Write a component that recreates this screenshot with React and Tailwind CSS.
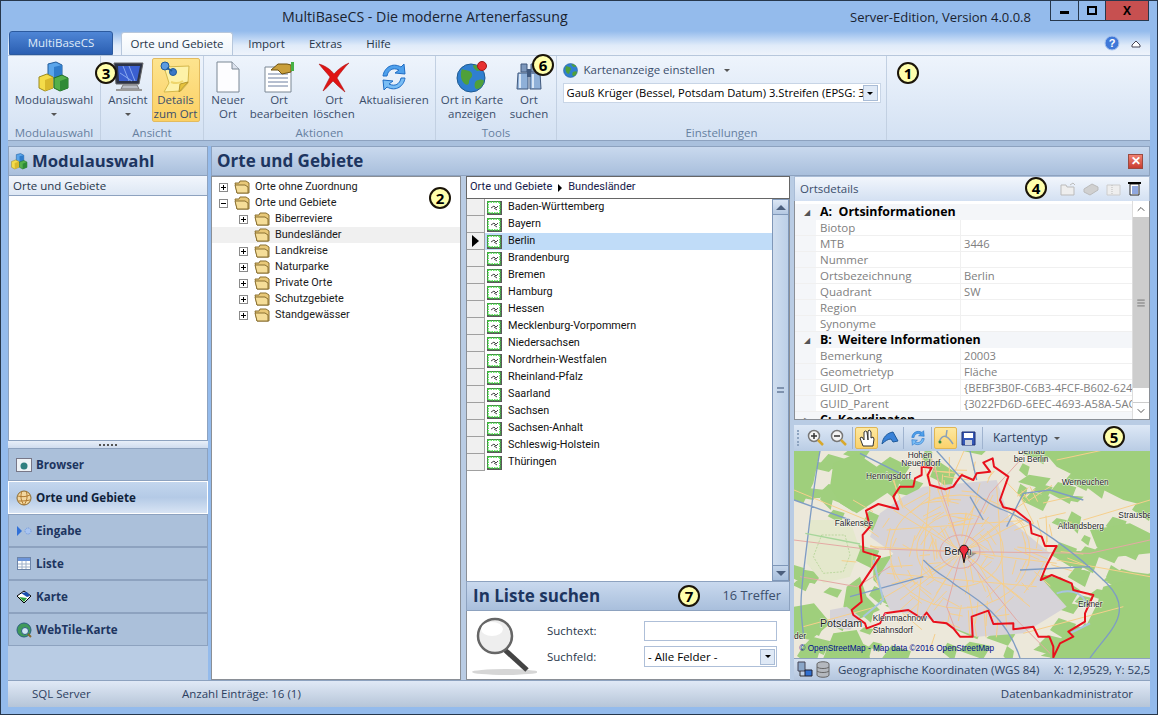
import React from 'react';
import { ChevronUp, ChevronDown, Menu } from 'lucide-react';

// Sprechblasen mit Nummer
const Badge = ({ n, className }) => (
    <div className={`absolute z-10 w-[22px] h-[22px] rounded-full bg-[#ffffac] border-2 border-[#1a1408] flex items-center justify-center text-[15px] leading-none font-bold text-black ${className}`}>{n}</div>
);

const Cubes = ({ s = 32 }) => (
    <svg width={s} height={s} viewBox="0 0 32 32">
        <path d="M10 3l8-2 6 3v11l-8 2-6-3z" fill="#5aa5ea" stroke="#1f5a9a" />
        <path d="M16 6l8-2v11l-8 2z" fill="#2f7ccb" />
        <path d="M1 16l8-3 6 3v11l-8 3-6-3z" fill="#f4dc4a" stroke="#9a8a20" />
        <path d="M7 19l8-3v11l-8 3z" fill="#d9b92c" />
        <path d="M16 17l8-3 6 3v10l-8 3-6-3z" fill="#55b04a" stroke="#1f6f24" />
        <path d="M22 20l8-3v10l-8 3z" fill="#2f8a36" />
    </svg>
);

const Monitor = () => (
    <svg width="34" height="32" viewBox="0 0 34 32">
        <path d="M3 2h29l-4 21H5z" fill="#2c3346" stroke="#666" />
        <path d="M7 5h22l-3 15H8z" fill="#3a5fd0" />
        <path d="M12 5l6 15M18 5l6 15M9 12l12 8" stroke="#88a8f0" fill="none" />
        <path d="M12 24h14l2 4H10z" fill="#b8bcc4" stroke="#777" />
        <path d="M5 29h26" stroke="#999" strokeWidth="2" />
    </svg>
);

const Note = () => (
    <svg width="32" height="32" viewBox="0 0 32 32">
        <path d="M4 6l25-1-1 17-7 8-17 1 5-9z" fill="#fdf2a8" stroke="#d4b84c" />
        <path d="M28 21l-8 2-1 8z" fill="#e6c23c" stroke="#b8982c" />
        <path d="M11 21c5 2 9 1 12-1" stroke="#eed66c" fill="none" strokeWidth="2" />
        <circle cx="5" cy="5" r="4" fill="#5c9ae0" stroke="#1f5a9a" />
        <circle cx="13" cy="11" r="3.5" fill="#3a78c8" stroke="#1f5a9a" />
        <path d="M7 7l5 3" stroke="#1f5a9a" strokeWidth="2" />
    </svg>
);

const Doc = () => (
    <svg width="26" height="32" viewBox="0 0 26 32">
        <path d="M2 1h15l7 7v23H2z" fill="#fdfdff" stroke="#7b8794" />
        <path d="M17 1v7h7" fill="#dde3ee" stroke="#7b8794" />
    </svg>
);

const EditDoc = () => (
    <svg width="32" height="32" viewBox="0 0 32 32">
        <path d="M2 6h26v25H2z" fill="#fff" stroke="#7b8794" />
        <path d="M5 13h20M5 17h20M5 21h20M5 25h20" stroke="#6d7fa0" />
        <path d="M8 9l7-6h9l4 1v7l-9 2-4-4z" fill="#c99f3c" stroke="#6e5210" />
        <rect x="28" y="1" width="3" height="9" fill="#45b045" />
    </svg>
);

const RedX = () => (
    <svg width="32" height="32" viewBox="0 0 32 32">
        <path d="M1 3C8 5 13 9 16 13 20 8 26 4 31 2 27 6 22 12 19 17 22 22 25 27 27 31 22 27 18 23 15 20 11 24 8 28 5 30 7 25 10 20 12 16 8 11 4 7 1 3Z" fill="#e01414" stroke="#a00c0c" strokeWidth="0.5" />
    </svg>
);

const Refresh = ({ s = 32 }) => (
    <svg width={s} height={s} viewBox="0 0 32 32" fill="none">
        <path d="M5 15C6 7 14 1 23 6l3-3 1 10-10-1 4-3C15 6 10 9 9 15z" fill="#4ea0ec" stroke="#1e6cc4" />
        <path d="M27 17c-1 8-9 14-18 9l-3 3-1-10 10 1-4 3c6 3 11 0 12-6z" fill="#79bdf5" stroke="#1e6cc4" />
    </svg>
);

const Globe = ({ s = 32, pin }) => (
    <svg width={s} height={s} viewBox="0 0 32 32">
        <circle cx="15" cy="17" r="14" fill="#2f7fd0" stroke="#1f5a90" />
        <path d="M6 8c5 2 9 1 10 5s-3 4-3 8-4 3-6 0-3-8-1-13zM20 20c4-2 7-2 8 0-1 5-4 8-7 8s-3-6-1-8zM17 4c4 0 8 2 10 5l-6 1c-2-2-4-3-4-6z" fill="#4fa03a" />
        {pin && <circle cx="26" cy="5" r="4.5" fill="#e83030" stroke="#a01818" />}
    </svg>
);

const Binoculars = () => (
    <svg width="28" height="32" viewBox="0 0 28 32">
        <path d="M6 3h6v8H6zM16 3h6v8h-6z" fill="#7e98bc" stroke="#41597d" />
        <path d="M3 12h10v16H2zM15 12h10l1 16H15z" fill="#8fb0d8" stroke="#41597d" />
        <path d="M5 13v14M18 13v14" stroke="#d8e6f6" strokeWidth="2" />
        <path d="M12 8h4v8h-4z" fill="#41597d" />
    </svg>
);

const Folder = () => (
    <svg width="16" height="14" viewBox="0 0 16 14">
        <path d="M1 3h4l1-2h6l3 2v10H3z" fill="#e8c878" stroke="#8a7030" />
        <path d="M1 5h10l3 2 0 6H3z" fill="#f5dd98" stroke="#8a7030" />
    </svg>
);

const Toggle = ({ open }) => (
    <span className="w-[9px] h-[9px] border border-[#8a8a8a] bg-white relative block">
        <span className="absolute left-[1px] top-[3px] w-[5px] h-[1px] bg-black" />
        {!open && <span className="absolute left-[3px] top-[1px] w-[1px] h-[5px] bg-black" />}
    </span>
);

const GeoIcon = () => (
    <svg width="15" height="14" viewBox="0 0 15 14">
        <rect x="0" y="0" width="15" height="14" fill="#5a5a5a" />
        <rect x="1" y="1" width="12" height="11" fill="#fff" stroke="#36e036" strokeWidth="1.5" strokeDasharray="1.5 1" />
        <path d="M4 7l3-2 2 2 2-2M7 7l3 2" stroke="#333" fill="none" strokeWidth="0.9" />
    </svg>
);

const Arrow = () => <span className="w-0 h-0 border-x-[3px] border-x-transparent border-t-[3px] border-t-[#555] block" />;

const ComboBtn = () => (
    <span className="w-[15px] h-[16px] bg-[#dfe9f6] border border-[#a9bcd6] flex items-center justify-center shrink-0">
        <span className="w-0 h-0 border-x-[3px] border-x-transparent border-t-[3px] border-t-black block" />
    </span>
);

const RibbonBtn = ({ icon, lines, arrow, active, width }) => (
    <div className={`flex flex-col items-center ${width} h-[64px] pt-[2px] border rounded-[2px] ${active ? 'bg-gradient-to-b from-[#fde48e] to-[#fbd063] border-[#e3bb5e]' : 'border-transparent'}`}>
        <div className="h-[32px] flex items-center justify-center">{icon}</div>
        <div className="text-center leading-[14px] text-[#3b4e6b] whitespace-nowrap">
            {lines.map((l) => <div key={l}>{l}</div>)}
            {arrow && <div className="h-[14px] flex items-center justify-center"><Arrow /></div>}
        </div>
    </div>
);

const RibbonGroup = ({ label, width, children }) => (
    <div className={`${width} h-full flex flex-col border-r border-[#c2d0e2] shrink-0`}>
        <div className="flex-1 flex justify-center pt-[2px]">{children}</div>
        <div className="h-[14px] text-center leading-[14px] text-[#66809f]">{label}</div>
    </div>
);

const tabs = [['Import', 'w-[67px]'], ['Extras', 'w-[51px]'], ['Hilfe', 'w-[55px]']];

const sideItems = [
    ['Browser', <svg key="b" width="16" height="14" viewBox="0 0 16 14"><rect x="0.5" y="0.5" width="15" height="13" fill="#eef2f6" stroke="#778" /><circle cx="8" cy="8" r="3.5" fill="#2f7f80" /></svg>],
    ['Orte und Gebiete', <svg key="o" width="16" height="16" viewBox="0 0 16 16"><circle cx="8" cy="8" r="7" fill="#f3d7a0" stroke="#8a6a30" /><path d="M2 6c4 1 8 1 12-1M2 11c4 0 8 0 12-1M6 1C4 6 5 11 8 15M10 1c2 5 1 10-2 14" stroke="#b07a30" fill="none" /></svg>],
    ['Eingabe', <svg key="e" width="16" height="12" viewBox="0 0 16 12"><path d="M1 1l5 5-5 5z" fill="#3070d8" /><circle cx="12" cy="6" r="3" fill="#a8c4f0" stroke="#6c94dc" strokeDasharray="1 1" /></svg>],
    ['Liste', <svg key="l" width="14" height="13" viewBox="0 0 14 13"><rect x="0.5" y="0.5" width="13" height="12" fill="#fff" stroke="#6c84a8" /><path d="M1 1h12v3H1z" fill="#6c94d8" /><path d="M5 4v8M9 4v8M1 7h12M1 10h12" stroke="#9fb0c8" /></svg>],
    ['Karte', <svg key="k" width="16" height="14" viewBox="0 0 16 14"><path d="M8 1l7 5-7 7-7-7z" fill="#fff" stroke="#000" /><path d="M5 3l6-1 3 4-3 1z" fill="#1a50b0" /><path d="M3 7l5 5 3-4z" fill="#2fa040" /></svg>],
    ['WebTile-Karte', <svg key="w" width="16" height="16" viewBox="0 0 16 16"><circle cx="8" cy="8" r="7" fill="#3f9a5a" stroke="#2c5f80" /><circle cx="9" cy="9" r="3.5" fill="#cfe4f5" stroke="#2c5f80" /><path d="M12 12l3 3" stroke="#8a6a30" strokeWidth="2" /></svg>],
];

const treeRows = [
    ['Orte ohne Zuordnung', 0, 'plus'],
    ['Orte und Gebiete', 0, 'minus'],
    ['Biberreviere', 1, 'plus'],
    ['Bundesländer', 1, null],
    ['Landkreise', 1, 'plus'],
    ['Naturparke', 1, 'plus'],
    ['Private Orte', 1, 'plus'],
    ['Schutzgebiete', 1, 'plus'],
    ['Standgewässer', 1, 'plus'],
];

const laender = ['Baden-Württemberg', 'Bayern', 'Berlin', 'Brandenburg', 'Bremen', 'Hamburg', 'Hessen', 'Mecklenburg-Vorpommern', 'Niedersachsen', 'Nordrhein-Westfalen', 'Rheinland-Pfalz', 'Saarland', 'Sachsen', 'Sachsen-Anhalt', 'Schleswig-Holstein', 'Thüringen'];

const details = [
    ['A:  Ortsinformationen'],
    ['Biotop', ''],
    ['MTB', '3446'],
    ['Nummer', ''],
    ['Ortsbezeichnung', 'Berlin'],
    ['Quadrant', 'SW'],
    ['Region', ''],
    ['Synonyme', ''],
    ['B:  Weitere Informationen'],
    ['Bemerkung', '20003'],
    ['Geometrietyp', 'Fläche'],
    ['GUID_Ort', '{BEBF3B0F-C6B3-4FCF-B602-6242'],
    ['GUID_Parent', '{3022FD6D-6EEC-4693-A58A-5ACD'],
    ['C:  Koordinaten'],
];

const border = 'M395 140L425 143 413 165 420 195 465 208 490 200 500 185 515 165 550 180 560 160 600 155 580 128 608 115 612 140 655 170 630 240 640 262 675 270 720 305 725 340 755 350 765 378 800 378 770 435 752 480 785 465 845 490 850 510 870 515 910 525 885 580 885 605 835 635 850 650 810 670 790 712 790 680 778 650 745 650 730 620 670 628 670 610 610 612 595 572 545 590 548 650 510 650 490 625 470 610 430 605 410 578 395 595 355 570 285 580 270 610 230 625 225 610 190 585 185 570 215 545 210 500 270 410 220 395 218 345 240 320 228 272 265 252 325 268 310 230 330 200 370 200 375 175 395 165Z';

// kleine Zufallsreihe, damit das Straßennetz immer gleich aussieht
let seed = 7;
const rnd = () => {
    seed = (seed * 16807) % 2147483647;
    return seed / 2147483647;
};

const cityRoads = Array.from({ length: 150 }, () => {
    const a = rnd() * Math.PI * 2;
    const r = 30 + rnd() * 290;
    const x = 515 + Math.cos(a) * r;
    const y = 395 + Math.sin(a) * r * 0.8;
    const b = a + (rnd() > 0.5 ? 1.57 : 0) + rnd() * 0.5;
    const l = 25 + rnd() * 60;
    return `M${x.toFixed(0)} ${y.toFixed(0)}L${(x + Math.cos(b) * l).toFixed(0)} ${(y + Math.sin(b) * l).toFixed(0)}`;
}).join('');

const greenBlobs = Array.from({ length: 170 }, () => {
    const a = rnd() * Math.PI * 2;
    const r = 290 + rnd() * 420;
    const x = 515 + Math.cos(a) * r;
    const y = 395 + Math.sin(a) * r * 0.75;
    const w = 14 + rnd() * 36;
    const h = 10 + rnd() * 28;
    return `M${(x - w).toFixed(0)} ${y.toFixed(0)}L${(x - w / 3).toFixed(0)} ${(y - h).toFixed(0)} ${(x + w).toFixed(0)} ${(y - h / 2).toFixed(0)} ${(x + w / 2).toFixed(0)} ${(y + h).toFixed(0)}Z`;
}).join('');

const mapLabels = [
    ['Hohen', 353, 114], ['Neuendorf', 334, 139], ['Hennigsdorf', 228, 176], ['Bernau', 684, 101], ['bei Berlin', 671, 127],
    ['Werneuchen', 815, 196], ['Strausberg', 985, 293], ['Altlandsberg', 803, 328], ['Falkensee', 134, 319], ['Erkner', 864, 562],
    ['Kleinmachnow', 248, 603], ['Stahnsdorf', 248, 640], ['der', 12, 658],
];

const MapView = () => (
    <svg width="356" height="207" viewBox="12 93 1068 621" className="block shrink-0">
        <rect x="12" y="93" width="1068" height="621" fill="#ece8da" />
        {/* Wald */}
        <path d={greenBlobs} fill="#a0cf7e" />
        <path d="M12 93H90L70 190 40 250 12 240Z M130 130l70-30 60 40 40-30 60 30-40 60-60 40-60 40-50-30-30-50Z M170 500l40-30 20 60 40 40-70 30-40-40Z M12 560l60-10 50 60-60 50-50-10Z M340 170l60 20-30 40-50-10Z" fill="#9fcf7c" />
        <path d="M760 93H1080V260L1000 240 900 190 800 140Z M940 500l140-40V714H780l40-70 70-30 30-60Z M740 500l70-30 60 40-30 50-60 20Z M250 420l80-20 20 70-60 50-40-40Z M440 120l60 40-40 30-40-20Z M900 330l120-20 60 30v60l-100 10-60-30Z M130 640l70-10 40 84H100Z" fill="#9fcf7c" />
        <path d="M60 300h120l30 90-30 80-80 20-50-60Z" fill="#e4e8cc" />
        <path d="M95 345h70l15 60-20 50-60 5-30-50Z" fill="none" stroke="#a8cf88" strokeWidth="2" strokeDasharray="6 4" />
        {/* Stadt */}
        <path d="M400 200L620 180 660 300 780 400 750 470 830 560 700 640 560 650 430 600 300 570 260 480 310 400 240 350 270 280 340 230Z" fill="#d6d3d8" />
        <path d="M120 570l50-10 40 30-30 40-60-10Z" fill="#d6d3d8" />
        {/* Straßen */}
        <g fill="none" stroke="#f6cf8c" strokeWidth="3">
            <path d={cityRoads} />
            <path d="M515 395L440 200M515 395L570 190M515 395L700 300M515 395L800 430M515 395L720 560M515 395L560 650M515 395L400 590M515 395L270 540M515 395L240 380M515 395L310 270" />
            <ellipse cx="510" cy="390" rx="130" ry="110" />
            <ellipse cx="510" cy="395" rx="210" ry="170" />
            <path d="M290 330L720 300M290 460L740 500M420 210L380 600M620 200L650 620M330 250L700 540M680 270L330 540" />
            <path d="M12 210L230 300M800 120L1080 60M880 300L1080 240M40 620L260 560M800 420L1080 470M700 640L1000 560" />
        </g>
        <g fill="none" stroke="#e4a9a4" strokeWidth="3">
            <path d="M515 395L460 230 420 100M515 395L600 220 700 110M515 395L900 400 1080 360M515 395L210 385 12 360M515 395L470 560 500 640M515 395L680 600 780 700M30 470L200 500 300 440" />
            <ellipse cx="510" cy="395" rx="60" ry="50" />
        </g>
        <g fill="none" stroke="#7e9cc4" strokeWidth="4">
            <path d="M90 93C70 200 60 300 45 420S30 560 40 640M440 93C520 180 560 240 640 270S860 400 950 490 950 640 900 714M540 230L580 300M400 420C450 470 470 470 490 490S640 560 690 714M180 530L400 470M650 320L700 220 780 210 880 240M12 240L180 300M690 450L900 440M210 100L330 160M540 93L560 180" />
        </g>
        <path d="M250 420L280 540 220 590M800 520C860 500 900 540 880 560M840 640l60-30" fill="none" stroke="#a8c4e0" strokeWidth="6" />
        <path d="M46 340L210 372" fill="none" stroke="#a6d69a" strokeWidth="4" />
        <path d="M530 395l30 4-25 18z" fill="#555" opacity="0.5" />
        <path d={border} fill="none" stroke="#e8101c" strokeWidth="6" strokeLinejoin="round" />
        <g fill="#1c1c1c" stroke="#ffffff" strokeWidth="3" paintOrder="stroke" strokeOpacity="0.8" fontSize="25" fontFamily="'Liberation Sans', sans-serif">
            {mapLabels.map(([t, x, y]) => <text key={t} x={x} y={y}>{t}</text>)}
            <text x="463" y="406" fontSize="32">Berlin</text>
            <text x="90" y="620" fontSize="32">Potsdam</text>
        </g>
        <path d="M522 428l-6-28a13 13 0 1 1 12 0z" fill="#ee2a3c" stroke="#111" strokeWidth="3" />
        <text x="28" y="692" fill="#000e8c" fontSize="24.7" fontFamily="'Liberation Sans', sans-serif">© OpenStreetMap - Map data ©2016 OpenStreetMap</text>
    </svg>
);

const ToolBtn = ({ active, children }) => (
    <span className={`w-[23px] h-[22px] flex items-center justify-center rounded-[2px] border ${active ? 'bg-gradient-to-b from-[#fde8a0] to-[#fbd26a] border-[#e0b654]' : 'border-transparent'}`}>{children}</span>
);

const Lens = ({ minus }) => (
    <svg width="18" height="18" viewBox="0 0 18 18">
        <circle cx="7" cy="7" r="5.5" fill="#f4f4f4" stroke="#777" strokeWidth="1.5" />
        <path d="M4 7h6" stroke="#333" strokeWidth="1.5" />
        {!minus && <path d="M7 4v6" stroke="#333" strokeWidth="1.5" />}
        <path d="M11 11l5 5" stroke="#d8a82c" strokeWidth="2.5" />
    </svg>
);

const Sep = () => <span className="w-[1px] h-[22px] bg-[#9fb3cf] mx-[2px]" />;

export default function App() {
    return (
        <div className="relative w-[1158px] h-[715px] overflow-hidden border border-[#26374c] bg-[#94bbec] flex flex-col font-['Open_Sans',sans-serif] text-[11.5px]">
            {/* Titelleiste */}
            <div className="relative h-[30px] shrink-0 flex">
                <div className="absolute left-[281px] top-[6px] text-[14.2px] leading-[20px] text-[#1a2330]">MultiBaseCS - Die moderne Artenerfassung</div>
                <div className="absolute left-[849px] top-[7px] text-[13px] leading-[18px] text-[#1a2330]">Server-Edition, Version 4.0.0.8</div>
                <div className="absolute right-[8px] top-0 h-[20px] flex border-x border-b border-[#26374c]">
                    <span className="w-[28px] flex items-center justify-center border-r border-[#26374c]"><span className="w-[9px] h-[3px] mt-[3px] bg-black" /></span>
                    <span className="w-[27px] flex items-center justify-center border-r border-[#26374c]"><span className="w-[10px] h-[9px] border-2 border-black" /></span>
                    <span className="w-[42px] flex items-center justify-center bg-[#c75050] font-bold text-[12px] text-black">X</span>
                </div>
            </div>
            {/* Tabs */}
            <div className="relative h-[24px] shrink-0 mx-[7px] flex items-end">
                <div className="absolute inset-0 bg-gradient-to-b from-[#94bbec] via-[#e0ebf9] via-60% to-[#eef3fb]" />
                <div className="relative w-[104px] h-[24px] ml-[1px] rounded-t-[3px] bg-gradient-to-b from-[#4f86d6] to-[#2b5fb2] border border-[#2c5a9e] text-[#dfeaf8] flex items-center justify-center">MultiBaseCS</div>
                <div className="relative ml-[8px] w-[112px] h-[23px] rounded-t-[3px] bg-gradient-to-b from-white to-[#eef4fb] border-x border-t border-[#b7c7dc] flex items-center justify-center text-[#27364a]">Orte und Gebiete</div>
                <div className="relative flex h-[23px] items-center text-[#27364a]">
                    {tabs.map(([t, w]) => <div key={t} className={`${w} text-center`}>{t}</div>)}
                </div>
                <svg className="absolute right-[30px] top-[4px]" width="16" height="16" viewBox="0 0 16 16">
                    <circle cx="8" cy="8" r="7" fill="#3f78d8" stroke="#a8c4ee" />
                    <text x="8" y="12" textAnchor="middle" fontSize="11" fontWeight="700" fill="#fff" fontFamily="'Liberation Sans'">?</text>
                </svg>
                <svg className="absolute right-[9px] top-[9px]" width="10" height="8" viewBox="0 0 10 8"><path d="M1 5l4-4 4 4v2H1z" fill="#fff" stroke="#445" /></svg>
            </div>
            {/* Ribbon */}
            <div className="relative h-[86px] shrink-0 mx-[7px] flex bg-gradient-to-b from-[#eef4fc] to-[#d3e1f3] border-t border-[#b7c7dc] border-b border-b-[#8da2bf]">
                <RibbonGroup label="Modulauswahl" width="w-[93px]">
                    <RibbonBtn icon={<Cubes />} lines={['Modulauswahl']} arrow width="w-[88px]" />
                </RibbonGroup>
                <RibbonGroup label="Ansicht" width="w-[103px]">
                    <div className="flex">
                        <RibbonBtn icon={<Monitor />} lines={['Ansicht']} arrow width="w-[47px]" />
                        <RibbonBtn icon={<Note />} lines={['Details', 'zum Ort']} active width="w-[48px]" />
                    </div>
                </RibbonGroup>
                <RibbonGroup label="Aktionen" width="w-[232px]">
                    <div className="flex ml-[2px] mr-auto">
                        <RibbonBtn icon={<Doc />} lines={['Neuer', 'Ort']} width="w-[44px]" />
                        <RibbonBtn icon={<EditDoc />} lines={['Ort', 'bearbeiten']} width="w-[58px]" />
                        <RibbonBtn icon={<RedX />} lines={['Ort', 'löschen']} width="w-[52px]" />
                        <RibbonBtn icon={<Refresh />} lines={['Aktualisieren']} width="w-[68px]" />
                    </div>
                </RibbonGroup>
                <RibbonGroup label="Tools" width="w-[121px]">
                    <div className="flex ml-[2px] mr-auto">
                        <RibbonBtn icon={<Globe pin />} lines={['Ort in Karte', 'anzeigen']} width="w-[68px]" />
                        <RibbonBtn icon={<Binoculars />} lines={['Ort', 'suchen']} width="w-[46px]" />
                    </div>
                </RibbonGroup>
                <RibbonGroup label="Einstellungen" width="w-[330px]">
                    <div className="w-[318px] flex flex-col mt-[1px]">
                        <div className="h-[22px] flex items-center gap-[5px] text-[#3b4e6b]">
                            <Globe s={16} />
                            <span>Kartenanzeige einstellen</span>
                            <span className="ml-[4px]"><Arrow /></span>
                        </div>
                        <div className="mt-[2px] w-[318px] h-[20px] bg-white border border-[#c8d5e6] flex items-center pl-[3px] pr-[2px] text-black overflow-hidden">
                            <span className="flex-1 whitespace-nowrap overflow-hidden text-[11.2px]">Gauß Krüger (Bessel, Potsdam Datum) 3.Streifen (EPSG: 31467)</span>
                            <ComboBtn />
                        </div>
                    </div>
                </RibbonGroup>
            </div>
            <div className="h-[5px] shrink-0 mx-[7px] bg-[#a9c0dd]" />
            {/* Hauptbereich */}
            <div className="h-[534px] shrink-0 mx-[7px] flex gap-[3px]">
                {/* Navigation */}
                <div className="w-[200px] shrink-0 flex flex-col bg-[#b9cce4]">
                    <div className="h-[30px] shrink-0 flex items-center pl-[2px] gap-[4px] bg-gradient-to-b from-[#cddcf0] to-[#a9bfdc] border border-[#8da2bf] text-[16.7px] font-bold text-[#1d3560]">
                        <Cubes s={17} />
                        <span>Modulauswahl</span>
                    </div>
                    <div className="h-[265px] shrink-0 flex flex-col bg-white border-x border-b border-[#8da2bf]">
                        <div className="h-[20px] shrink-0 pl-[4px] leading-[19px] bg-gradient-to-b from-[#f2f6fc] to-[#dde7f4] border-b border-[#8da2bf] text-[#27364a]">Orte und Gebiete</div>
                    </div>
                    <div className="h-[7px] shrink-0 flex items-center justify-center bg-gradient-to-b from-[#e8eff9] to-[#cfdcee]">
                        <span className="w-[18px] h-[2px] border-t-2 border-dotted border-[#555]" />
                    </div>
                    {sideItems.map(([label, icon]) => (
                        <div key={label} className={`h-[33px] shrink-0 flex items-center text-[11.6px] font-bold border ${label === 'Orte und Gebiete' ? 'bg-gradient-to-b from-[#c3d6ee] via-[#b4cae6] to-[#d8e4f4] border-white text-[#0f1f3a]' : 'bg-[#abc0da] border-[#8da2bf] text-[#1d3560]'}`}>
                            <span className="w-[26px] pl-[4px] flex justify-center shrink-0">{icon}</span>
                            <span className="ml-[1px]">{label}</span>
                        </div>
                    ))}
                </div>
                {/* Orte und Gebiete */}
                <div className="flex-1 flex flex-col bg-[#b9cce4] min-w-0">
                    <div className="h-[30px] shrink-0 flex items-center justify-between pl-[5px] pr-[6px] bg-gradient-to-b from-[#c9d9ee] to-[#a9bfdc] border border-[#8da2bf] text-[17px] font-bold text-[#1d3560]">
                        <span>Orte und Gebiete</span>
                        <span className="w-[15px] h-[15px] bg-gradient-to-b from-[#f08070] to-[#c83c30] border border-[#9a4a40] flex items-center justify-center text-white text-[12px] leading-none">✕</span>
                    </div>
                    <div className="flex-1 flex min-h-0">
                        {/* Baum */}
                        <div className="w-[250px] shrink-0 bg-white border border-[#8a8f96] pt-[2px] font-['Roboto',sans-serif] text-[10.9px]">
                            {treeRows.map(([label, level, state]) => (
                                <div key={label} className={`h-[16px] flex items-center text-[#1a1a1a] ${level ? 'pl-[27px]' : 'pl-[7px]'} ${label === 'Bundesländer' ? 'bg-[#f0f0f0]' : ''}`}>
                                    <span className="w-[9px] shrink-0">{state && <Toggle open={state === 'minus'} />}</span>
                                    <span className="ml-[6px] mr-[5px] shrink-0"><Folder /></span>
                                    <span className="leading-none">{label}</span>
                                </div>
                            ))}
                        </div>
                        <div className="w-[5px] shrink-0" />
                        {/* Liste */}
                        <div className="w-[324px] shrink-0 flex flex-col">
                            <div className="h-[23px] shrink-0 bg-white border border-[#666] flex items-center pl-[3px] gap-[6px] text-[#161a4a] font-['Roboto',sans-serif] text-[11px]">
                                <span>Orte und Gebiete</span>
                                <span className="w-0 h-0 border-y-[4px] border-y-transparent border-l-[4px] border-l-black" />
                                <span>Bundesländer</span>
                            </div>
                            <div className="h-[382px] shrink-0 flex bg-white border-x border-[#8a8f96]">
                                <div className="flex-1 min-w-0 font-['Roboto',sans-serif] text-[10.8px]">
                                    {laender.map((name) => (
                                        <div key={name} className={`h-[17px] flex items-center ${name === 'Berlin' ? 'bg-[#c0dcf8]' : ''}`}>
                                            <span className="w-[18px] h-[17px] bg-[#f0f0f0] border-b border-r border-[#a0a0a0] flex items-center justify-center shrink-0">
                                                {name === 'Berlin' && <span className="w-0 h-0 border-y-[6px] border-y-transparent border-l-[7px] border-l-black" />}
                                            </span>
                                            <span className="ml-[2px] mr-[6px] shrink-0"><GeoIcon /></span>
                                            <span className="text-[#111] leading-none">{name}</span>
                                        </div>
                                    ))}
                                </div>
                                <div className="w-[17px] shrink-0 flex flex-col bg-[#e8eef6]">
                                    <div className="h-[16px] shrink-0 bg-gradient-to-b from-[#dce7f5] to-[#b4c8e2] border border-[#7f97b8] flex items-center justify-center">
                                        <span className="w-0 h-0 border-x-[5px] border-x-transparent border-b-[5px] border-b-[#4c5f7c]" />
                                    </div>
                                    <div className="flex-1 bg-gradient-to-r from-[#d0deef] to-[#bcd0e8] border-x border-[#7f97b8] flex items-center justify-center">
                                        <span className="w-[7px] h-[6px] border-y-2 border-[#7e92ae]" />
                                    </div>
                                    <div className="h-[16px] shrink-0 bg-gradient-to-b from-[#c4d5ea] to-[#a8bfdc] border border-[#7f97b8] flex items-center justify-center">
                                        <span className="w-0 h-0 border-x-[5px] border-x-transparent border-t-[5px] border-t-[#4c5f7c]" />
                                    </div>
                                </div>
                            </div>
                            <div className="h-[30px] shrink-0 flex items-center justify-between pl-[6px] pr-[8px] bg-gradient-to-b from-[#c9d9ee] to-[#a9bfdc] border border-[#8da2bf] text-[#1d3560]">
                                <span className="text-[17px] font-bold">In Liste suchen</span>
                                <span className="text-[12.8px] text-[#3b4e6b]">16 Treffer</span>
                            </div>
                            <div className="flex-1 bg-white flex border-b border-[#8a8f96] border-l border-l-[#8a8f96]">
                                <svg className="ml-[4px] mt-[3px] shrink-0" width="66" height="62" viewBox="0 0 66 62">
                                    <ellipse cx="34" cy="58" rx="33" ry="3" fill="#bbb" opacity="0.6" />
                                    <path d="M34 36l22 20" stroke="#444" strokeWidth="5" />
                                    <circle cx="24" cy="22" r="17" fill="#eeeeee" stroke="#666" strokeWidth="2.5" />
                                    <ellipse cx="21" cy="15" rx="11" ry="7" fill="#fff" />
                                </svg>
                                <div className="ml-[10px] flex flex-col text-[#27364a]">
                                    <div className="mt-[9px] h-[21px] flex items-center">
                                        <span className="w-[97px]">Suchtext:</span>
                                        <span className="w-[133px] h-[20px] border border-[#aebfd8] bg-white" />
                                    </div>
                                    <div className="mt-[5px] h-[21px] flex items-center">
                                        <span className="w-[97px]">Suchfeld:</span>
                                        <span className="w-[133px] h-[21px] border border-[#aebfd8] bg-white flex items-center justify-between pl-[3px] pr-[1px] text-black">
                                            - Alle Felder -
                                            <ComboBtn />
                                        </span>
                                    </div>
                                </div>
                            </div>
                        </div>
                        <div className="w-[4px] shrink-0" />
                        {/* Ortsdetails und Karte */}
                        <div className="flex-1 min-w-0 flex flex-col">
                            <div className="h-[25px] shrink-0 flex items-center justify-between pl-[5px] pr-[8px] bg-gradient-to-b from-[#f2f6fc] to-[#d3e0f2] border-x border-t border-[#a9bcd6] text-[#3b4e6b]">
                                <span>Ortsdetails</span>
                                <span className="flex items-center gap-[7px]">
                                    <svg width="16" height="14" viewBox="0 0 16 14"><path d="M1 3h5l1 2h7v8H1z" fill="#eee" stroke="#bbb" /><path d="M10 3l3-2 2 2" stroke="#bbb" fill="none" /></svg>
                                    <svg width="16" height="14" viewBox="0 0 16 14"><path d="M1 7l8-5 6 3v3l-8 5-6-3z" fill="#d0d0d0" stroke="#bbb" /></svg>
                                    <svg width="15" height="14" viewBox="0 0 15 14"><path d="M1 3h13v10H1z" fill="#eee" stroke="#ccc" /><path d="M6 3v10" stroke="#bbb" strokeDasharray="1 1" /></svg>
                                    <svg width="13" height="14" viewBox="0 0 13 14"><path d="M2 2h9v11H2z" fill="#fff" stroke="#222" /><path d="M0 1h13" stroke="#000" strokeWidth="2" /><path d="M4 5h6M4 7h6M4 9h6M4 11h6" stroke="#2050c0" /></svg>
                                </span>
                            </div>
                            <div className="h-[219px] shrink-0 flex bg-white border-x border-b border-[#8a8f96] overflow-hidden">
                                <div className="flex-1 min-w-0 overflow-hidden pt-[3px]">
                                    {details.map(([k, v]) => v === undefined ? (
                                        <div key={k} className="h-[16px] flex items-center bg-[#f4f6f9] text-[12.4px] font-bold text-black">
                                            <span className="w-[25px] pl-[9px] text-[#555] text-[8px] font-normal shrink-0">{k[0] === 'C' ? '▷' : '◢'}</span>
                                            <span className="whitespace-pre leading-none">{k}</span>
                                        </div>
                                    ) : (
                                        <div key={k} className="h-[16px] flex border-b border-[#f0f0f0] text-[#808080]">
                                            <span className="w-[21px] shrink-0 bg-[#f4f6f9]" />
                                            <span className="w-[145px] shrink-0 border-r border-[#f0f0f0] leading-[15px] pl-[4px]">{k}</span>
                                            <span className="pl-[3px] leading-[15px] whitespace-nowrap text-[11.2px]">{v}</span>
                                        </div>
                                    ))}
                                </div>
                                <div className="w-[17px] shrink-0 flex flex-col bg-white border-l border-[#ddd]">
                                    <div className="h-[17px] shrink-0 flex items-center justify-center border-b border-[#ccc] text-[#555]"><ChevronUp size={12} /></div>
                                    <div className="h-[170px] shrink-0 bg-[#cdcdcd] flex items-center justify-center text-[#666]"><Menu size={10} /></div>
                                    <div className="flex-1" />
                                    <div className="h-[17px] shrink-0 flex items-center justify-center border-t border-[#ccc] text-[#555]"><ChevronDown size={12} /></div>
                                </div>
                            </div>
                            <div className="h-[5px] shrink-0" />
                            <div className="h-[26px] shrink-0 flex items-center pl-[3px] bg-gradient-to-b from-[#dde8f6] to-[#b9cce4] text-[#27364a]">
                                <span className="w-[2px] h-[16px] mr-[5px] border-l-2 border-dotted border-[#8ea4c0]" />
                                <ToolBtn><Lens /></ToolBtn>
                                <ToolBtn><Lens minus /></ToolBtn>
                                <Sep />
                                <ToolBtn active><svg width="17" height="18" viewBox="0 0 17 18"><path d="M5 17L2 9l2-1 2 3V3l1.5-1L9 3l1 8V2l1.5-1L13 3v6l2-1 1 2-1 7z" fill="#fff" stroke="#333" /></svg></ToolBtn>
                                <ToolBtn><svg width="18" height="14" viewBox="0 0 18 14"><path d="M1 13C2 6 6 2 12 1l5 9-5 1-2-3c-3 0-6 2-9 5z" fill="#3a82d8" stroke="#1f5a9a" /></svg></ToolBtn>
                                <Sep />
                                <ToolBtn><Refresh s={18} /></ToolBtn>
                                <Sep />
                                <ToolBtn active><svg width="18" height="18" viewBox="0 0 18 18" fill="none"><path d="M2 13C5 6 9 4 16 15M10 1L9 8" stroke="#8aa0b8" strokeWidth="1.5" /><circle cx="3" cy="13" r="1.5" fill="#3a8a3a" /></svg></ToolBtn>
                                <ToolBtn><svg width="15" height="15" viewBox="0 0 15 15"><path d="M1 1h13v13H1z" fill="#3558b8" stroke="#1f2f70" /><path d="M3 2h9v5H3z" fill="#fff" /><path d="M4 9h7v5H4z" fill="#c8cfdc" /></svg></ToolBtn>
                                <Sep />
                                <span className="ml-[8px] text-[12px] text-[#2c4060]">Kartentyp</span>
                                <span className="ml-[6px]"><Arrow /></span>
                            </div>
                            <MapView />
                            <div className="flex-1 flex items-center bg-gradient-to-b from-[#d5e1f1] to-[#b4c6de] pl-[3px] overflow-hidden whitespace-nowrap text-[#2c4060] border-t border-[#8da2bf]">
                                <svg className="shrink-0" width="16" height="17" viewBox="0 0 16 17"><path d="M1 1h7v9H1z" fill="#8aa6c8" stroke="#445" /><path d="M8 9h7v6H8z" fill="#2f6fd0" stroke="#223" /><path d="M3 10v5h5" stroke="#333" fill="none" /></svg>
                                <svg className="shrink-0 ml-[3px]" width="14" height="17" viewBox="0 0 14 17"><path d="M1 3c0-3 12-3 12 0v11c0 3-12 3-12 0z" fill="#b4b8be" stroke="#666" /><path d="M1 6c2 2 10 2 12 0M1 10c2 2 10 2 12 0" stroke="#666" fill="none" /></svg>
                                <span className="ml-[8px] w-[216px] shrink-0">Geographische Koordinaten (WGS 84)</span>
                                <span className="shrink-0">X: 12,9529, Y: 52,5</span>
                            </div>
                        </div>
                    </div>
                </div>
            </div>
            {/* Statusleiste */}
            <div className="h-[27px] shrink-0 mx-[7px] flex items-center bg-gradient-to-b from-[#e0e9f6] to-[#b6c5d8] border-t border-[#8da2bf] text-[#2c4060]">
                <span className="ml-[24px] w-[150px]">SQL Server</span>
                <span>Anzahl Einträge: 16 (1)</span>
                <span className="ml-auto mr-[17px]">Datenbankadministrator</span>
            </div>
            <Badge n="3" className="left-[94px] top-[61px]" />
            <Badge n="6" className="left-[531px] top-[53px]" />
            <Badge n="1" className="left-[896px] top-[61px]" />
            <Badge n="2" className="left-[428px] top-[186px]" />
            <Badge n="4" className="left-[1024px] top-[176px]" />
            <Badge n="5" className="left-[1102px] top-[425px]" />
            <Badge n="7" className="left-[677px] top-[584px]" />
        </div>
    );
}
